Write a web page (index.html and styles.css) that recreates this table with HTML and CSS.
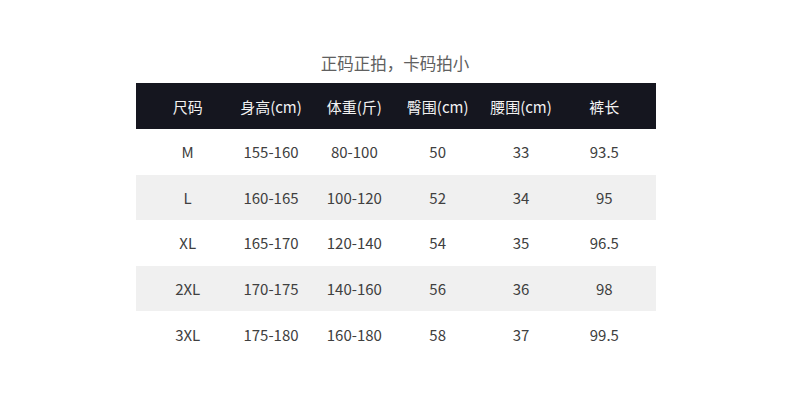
FILE: index.html
```html
<!DOCTYPE html>
<html lang="zh">
<head>
<meta charset="utf-8">
<link rel="stylesheet" href="styles.css">
</head>
<body>
<div class="page">
  <div class="title">正码正拍，卡码拍小</div>
  <div class="table">
    <div class="row head">
      <span>尺码</span><span>身高(cm)</span><span>体重(斤)</span><span>臀围(cm)</span><span>腰围(cm)</span><span>裤长</span>
    </div>
    <div class="row">
      <span>M</span><span>155-160</span><span>80-100</span><span>50</span><span>33</span><span>93.5</span>
    </div>
    <div class="row alt">
      <span>L</span><span>160-165</span><span>100-120</span><span>52</span><span>34</span><span>95</span>
    </div>
    <div class="row">
      <span>XL</span><span>165-170</span><span>120-140</span><span>54</span><span>35</span><span>96.5</span>
    </div>
    <div class="row alt">
      <span>2XL</span><span>170-175</span><span>140-160</span><span>56</span><span>36</span><span>98</span>
    </div>
    <div class="row">
      <span>3XL</span><span>175-180</span><span>160-180</span><span>58</span><span>37</span><span>99.5</span>
    </div>
  </div>
</div>
</body>
</html>
```
FILE: styles.css
```css
html, body {
  margin: 0;
  padding: 0;
  background: #ffffff;
}
body {
  width: 790px;
  height: 414px;
  font-family: "Noto Sans CJK SC", "Noto Sans", sans-serif;
}
.page {
  padding-top: 49px;
  padding-left: 136px;
  width: 520px;
}
.title {
  text-align: center;
  font-size: 16.5px;
  line-height: 28px;
  color: #606060;
  height: 34px;
  padding-right: 2px;
}
.table {
  display: flex;
  flex-direction: column;
}
.row {
  display: grid;
  grid-template-columns: repeat(6, 1fr);
  padding: 0 10px;
  height: 45.6px;
  align-items: center;
  font-size: 15px;
  color: #404040;
}
.row span {
  text-align: center;
}
.row.head {
  background: #15161f;
  color: #f2f2f2;
  height: 46px;
  font-size: 15px;
}
.row.alt {
  background: #f0f0f0;
}
```
